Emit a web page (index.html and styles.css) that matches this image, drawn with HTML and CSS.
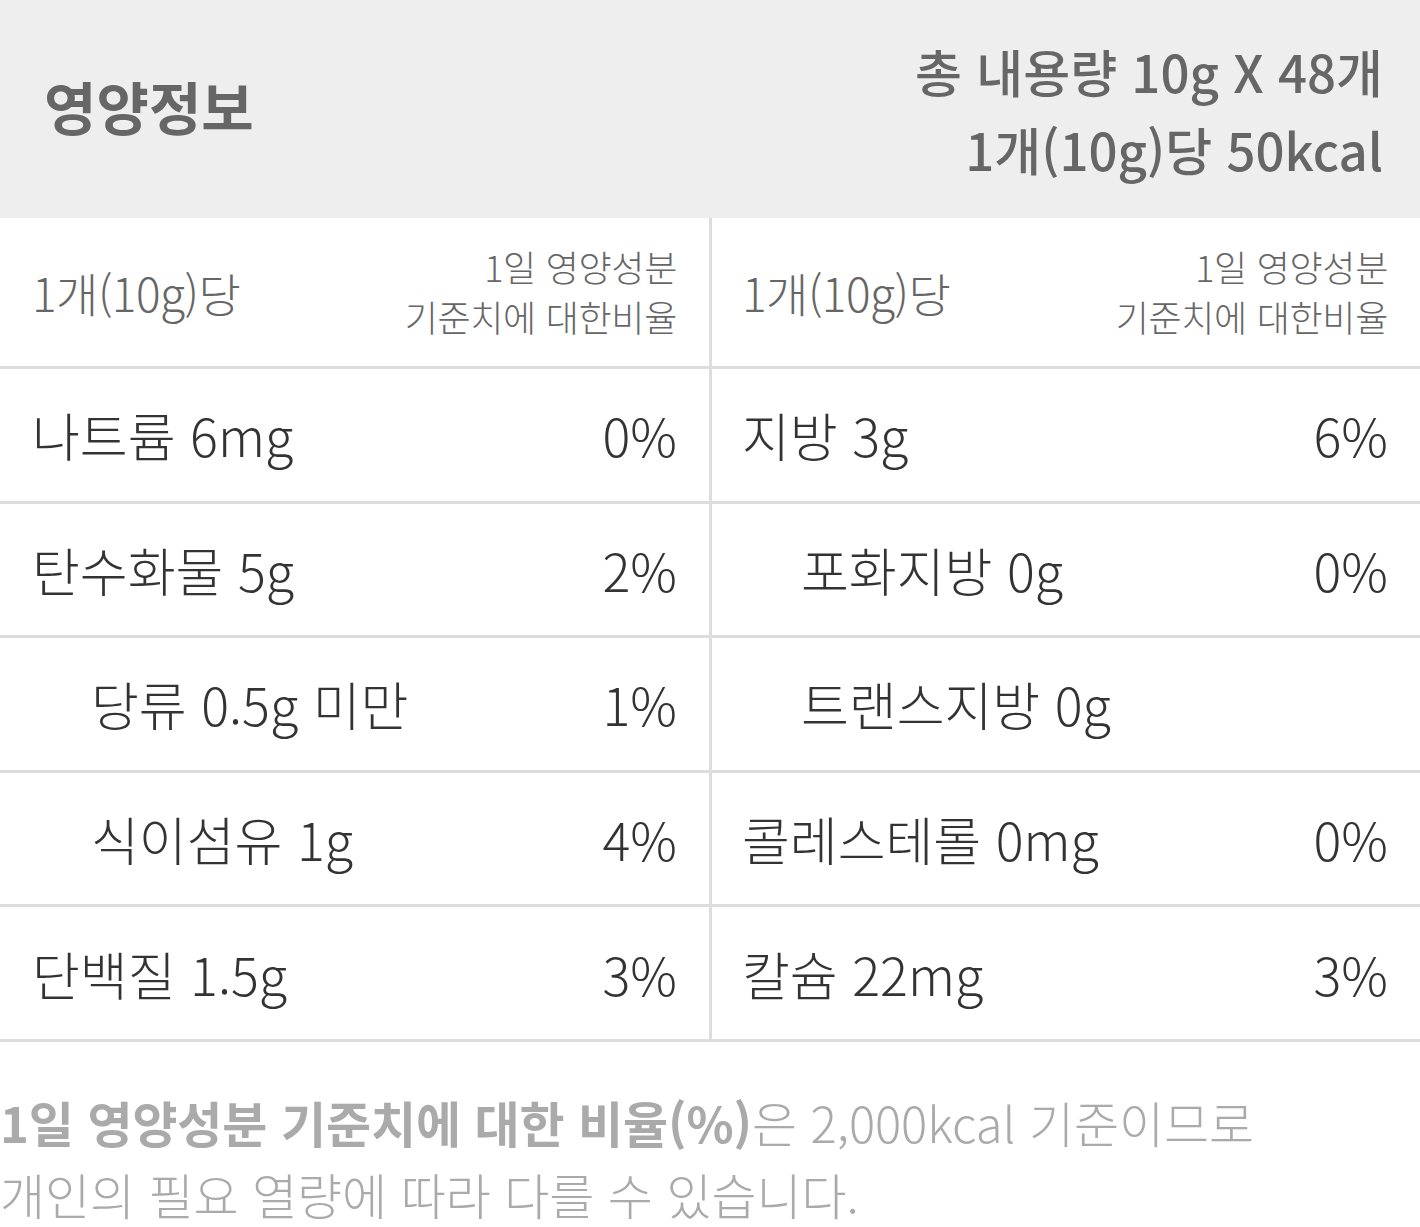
FILE: index.html
```html
<!DOCTYPE html>
<html lang="ko">
<head>
<meta charset="utf-8">
<link rel="stylesheet" href="styles.css">
</head>
<body>
<div class="page">
  <header class="head">
    <h1 class="title">영양정보</h1>
    <div class="summary">
      <div>총 내용량 10g X 48개</div>
      <div>1개(10g)당 50kcal</div>
    </div>
  </header>
  <div class="table">
    <div class="cell cell-head">
      <span class="per">1개(10g)당</span>
      <span class="ratio">1일 영양성분<br>기준치에 대한비율</span>
    </div>
    <div class="cell cell-head right">
      <span class="per">1개(10g)당</span>
      <span class="ratio">1일 영양성분<br>기준치에 대한비율</span>
    </div>

    <div class="cell"><span>나트륨 6mg</span><span>0%</span></div>
    <div class="cell right"><span>지방 3g</span><span>6%</span></div>

    <div class="cell"><span>탄수화물 5g</span><span>2%</span></div>
    <div class="cell right sub"><span>포화지방 0g</span><span>0%</span></div>

    <div class="cell sub"><span>당류 0.5g 미만</span><span>1%</span></div>
    <div class="cell right sub"><span>트랜스지방 0g</span><span></span></div>

    <div class="cell sub"><span>식이섬유 1g</span><span>4%</span></div>
    <div class="cell right"><span>콜레스테롤 0mg</span><span>0%</span></div>

    <div class="cell"><span>단백질 1.5g</span><span>3%</span></div>
    <div class="cell right"><span>칼슘 22mg</span><span>3%</span></div>
  </div>
  <p class="note"><strong>1일 영양성분 기준치에 대한 비율(%)</strong>은 2,000kcal 기준이므로<br>개인의 필요 열량에 따라 다를 수 있습니다.</p>
</div>
</body>
</html>
```

FILE: styles.css
```css
html, body {
  margin: 0;
  padding: 0;
  background: #fff;
}
.page {
  width: 1420px;
  font-family: "Noto Sans CJK KR", "Noto Sans", sans-serif;
  color: #333;
}
.head {
  height: 218px;
  background: #eeeeee;
  display: flex;
  align-items: center;
  justify-content: space-between;
  padding: 0 37px 0 44px;
  box-sizing: border-box;
  color: #666;
}
.title {
  margin: 0 0 8px 0;
  font-size: 57px;
  font-weight: 700;
  letter-spacing: 0;
}
.summary {
  text-align: right;
  font-size: 51px;
  font-weight: 500;
  line-height: 78px;
  letter-spacing: 0;
  padding-top: 2px;
}
.table {
  display: grid;
  grid-template-columns: 709px 711px;
}
.cell {
  height: 134.6px;
  box-sizing: border-box;
  border-bottom: 3px solid #dddddd;
  display: flex;
  align-items: center;
  justify-content: space-between;
  padding: 0 32px 0 32px;
  font-size: 52px;
  font-weight: 300;
  letter-spacing: 0;
}
.cell.right {
  border-left: 3px solid #dddddd;
  padding-left: 30px;
}
.cell.sub {
  padding-left: 91px;
}
.cell.right.sub {
  padding-left: 89px;
}
.cell-head {
  height: 151px;
  color: #666;
}
.per {
  font-size: 46px;
  letter-spacing: -0.5px;
}
.ratio {
  text-align: right;
  font-size: 36px;
  line-height: 50px;
  letter-spacing: -0.3px;
  padding-bottom: 2px;
}
.note {
  margin: 44px 0 0 0;
  color: #aaa;
  font-size: 49px;
  font-weight: 300;
  line-height: 72px;
  letter-spacing: -0.1px;
}
.note strong {
  font-weight: 700;
}
```
